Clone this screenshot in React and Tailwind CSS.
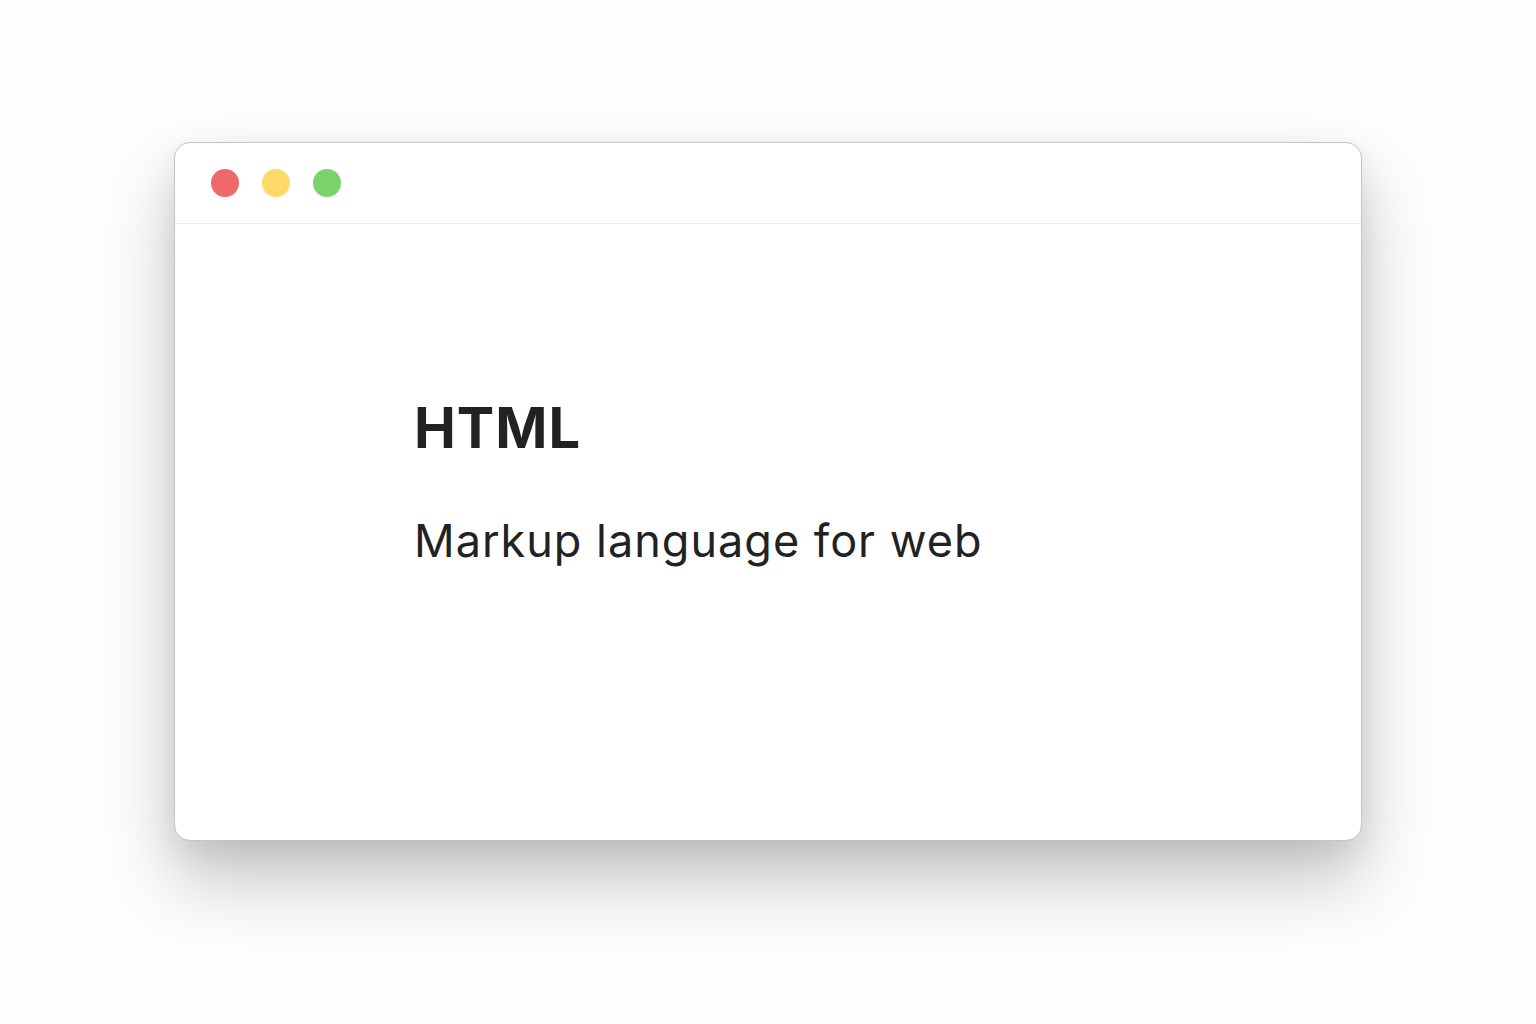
export default function App() {
  return (
    <div
      className="flex min-h-screen w-full justify-center bg-[#fdfdfd] pt-[142px]"
      style={{ fontFamily: "Inter, 'Noto Sans', sans-serif" }}
    >
      <div className="flex h-[699px] w-[1188px] flex-col overflow-hidden rounded-[16px] border border-[#c4c4c4] bg-white shadow-[0_40px_70px_rgba(0,0,0,0.22),0_10px_30px_rgba(0,0,0,0.08)]">
        <div className="flex h-[81px] items-center gap-[23px] border-b border-[#ebebeb] pl-[36px]">
          <span className="h-[28px] w-[28px] rounded-full bg-[#ee6a6a]" />
          <span className="h-[28px] w-[28px] rounded-full bg-[#fdd96a]" />
          <span className="h-[28px] w-[28px] rounded-full bg-[#7bd36b]" />
        </div>
        <div className="flex flex-col pl-[239px] pt-[176px] text-[#222222]">
          <h1 className="text-[56px] font-bold leading-none tracking-[1px]">HTML</h1>
          <p className="mt-[62px] text-[45px] leading-none tracking-[1px]">Markup language for web</p>
        </div>
      </div>
    </div>
  );
}
